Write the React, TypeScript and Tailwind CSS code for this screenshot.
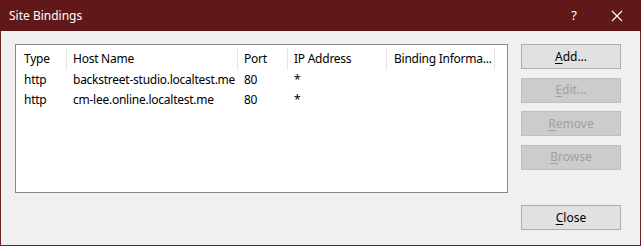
const font = { fontFamily: '"Segoe UI", "Noto Sans", "Open Sans", sans-serif' };

const cols = [
  { label: 'Type', w: 'w-[51px]', pl: 'pl-[8px]' },
  { label: 'Host Name', w: 'w-[171px]', pl: 'pl-[6px]' },
  { label: 'Port', w: 'w-[50px]', pl: 'pl-[6px]' },
  { label: 'IP Address', w: 'w-[99px]', pl: 'pl-[6px]' },
  { label: 'Binding Informa...', w: 'w-[108px]', pl: 'pl-[7px]' },
];

const rows = [
  ['http', 'backstreet-studio.localtest.me', '80', '*'],
  ['http', 'cm-lee.online.localtest.me', '80', '*'],
];

function DlgButton({ label, hot, disabled }: { label: string; hot: string; disabled?: boolean }) {
  const rest = label.slice(hot.length);
  return (
    <div
      className={
        'flex h-[25px] w-[100px] items-center justify-center border text-[12px] ' +
        (disabled
          ? 'border-[#bfbfbf] bg-[#cccccc] text-[#a0a0a0]'
          : 'border-[#adadad] bg-[#e1e1e1] text-[#000000]')
      }
    >
      <span>
        <span className="underline underline-offset-2">{hot}</span>
        {rest}
      </span>
    </div>
  );
}

export default function App() {
  return (
    <div className="h-[248px] w-[641px] bg-white" style={font}>
      <div className="flex h-[246px] w-[641px] flex-col">
        <div className="flex h-[31px] items-center bg-[#611818] pl-[9px] text-[12px] text-white">
          <span className="flex-1">Site Bindings</span>
          <span className="mr-[34px] text-[13px]">?</span>
          <svg width="12" height="12" viewBox="0 0 12 12" className="mr-[18px]">
            <path d="M1 1L11 11M11 1L1 11" stroke="white" strokeWidth="1.1" />
          </svg>
        </div>
        <div className="flex flex-1 flex-col border-x border-b border-[#6b2424] bg-[#f0f0f0] pl-[14px] pt-[13px]">
          <div className="flex">
            <div className="h-[149px] w-[493px] border border-[#828790] bg-white pt-[2px] text-[12px] tracking-[-0.25px] text-black">
              <div className="flex h-[23px] items-center">
                {cols.map((c) => (
                  <div
                    key={c.label}
                    className={`flex h-[22px] shrink-0 items-center whitespace-nowrap border-r border-[#e5e5e5] pt-[1px] ${c.w} ${c.pl}`}
                  >
                    {c.label}
                  </div>
                ))}
              </div>
              {rows.map((r) => (
                <div key={r[1]} className="flex h-[20px] items-center">
                  {r.map((v, i) => (
                    <div key={i} className={`shrink-0 whitespace-nowrap ${cols[i].w} ${cols[i].pl}`}>
                      {v}
                    </div>
                  ))}
                </div>
              ))}
            </div>
            <div className="ml-[13px] flex flex-col gap-[8.5px]">
              <DlgButton label="Add..." hot="A" />
              <DlgButton label="Edit..." hot="E" disabled />
              <DlgButton label="Remove" hot="R" disabled />
              <DlgButton label="Browse" hot="B" disabled />
            </div>
          </div>
          <div className="mt-[12px] flex justify-end pr-[19px]">
            <DlgButton label="Close" hot="C" />
          </div>
        </div>
      </div>
    </div>
  );
}
